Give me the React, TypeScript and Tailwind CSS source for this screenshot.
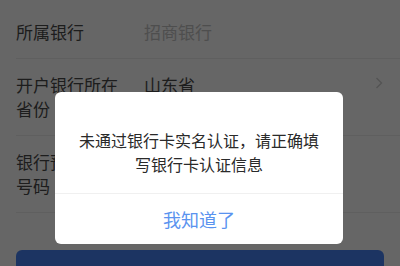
import React from "react";

const font = { fontFamily: '"Noto Sans CJK SC", "Noto Sans", sans-serif' };

function Row({
  label,
  value,
  muted,
  arrow,
}: {
  label: string;
  value?: string;
  muted?: boolean;
  arrow?: boolean;
}) {
  return (
    <div className="ml-4 flex items-start border-b border-[#eeeeee] py-[14px] pr-[17px]">
      <div className="w-[110px] flex-none text-[17px] leading-[24px] text-[#4a4a4a]">{label}</div>
      <div
        className={`ml-[18px] flex-1 text-[17px] leading-[24px] ${muted ? "text-[#c4c4c4]" : "text-[#4a4a4a]"}`}
      >
        {value}
      </div>
      {arrow && (
        <svg width="8" height="24" viewBox="0 0 8 24" className="flex-none">
          <path d="M1.5 5 L6.5 10 L1.5 15" fill="none" stroke="#d0d0d0" strokeWidth="1.4" />
        </svg>
      )}
    </div>
  );
}

export default function App() {
  return (
    <div className="relative h-[266px] w-[400px] overflow-hidden bg-white" style={font}>
      <div className="pt-[6px]">
        <Row label="所属银行" value="招商银行" muted />
        <Row label="开户银行所在省份" value="山东省" arrow />
        <Row label="银行预留手机号码" value="" />
        <div className="mx-4 mt-[37px] flex h-[48px] items-center justify-center rounded-[6px] bg-[#4883f4] pt-[34px] text-[17px] text-white">
          下一步
        </div>
      </div>

      <div className="absolute inset-0 bg-black/60" />

      <div className="absolute left-[55px] top-[92px] w-[288px] overflow-hidden rounded-[6px] bg-white">
        <div className="px-5 pb-[17px] pt-[36px] text-center text-[16px] leading-[24px] text-[#2a2a2a]">
          未通过银行卡实名认证，请正确填写银行卡认证信息
        </div>
        <div className="flex h-[51px] items-center justify-center border-t border-[#f0f0f0] text-[18px] text-[#5a93ef]">
          我知道了
        </div>
      </div>
    </div>
  );
}
